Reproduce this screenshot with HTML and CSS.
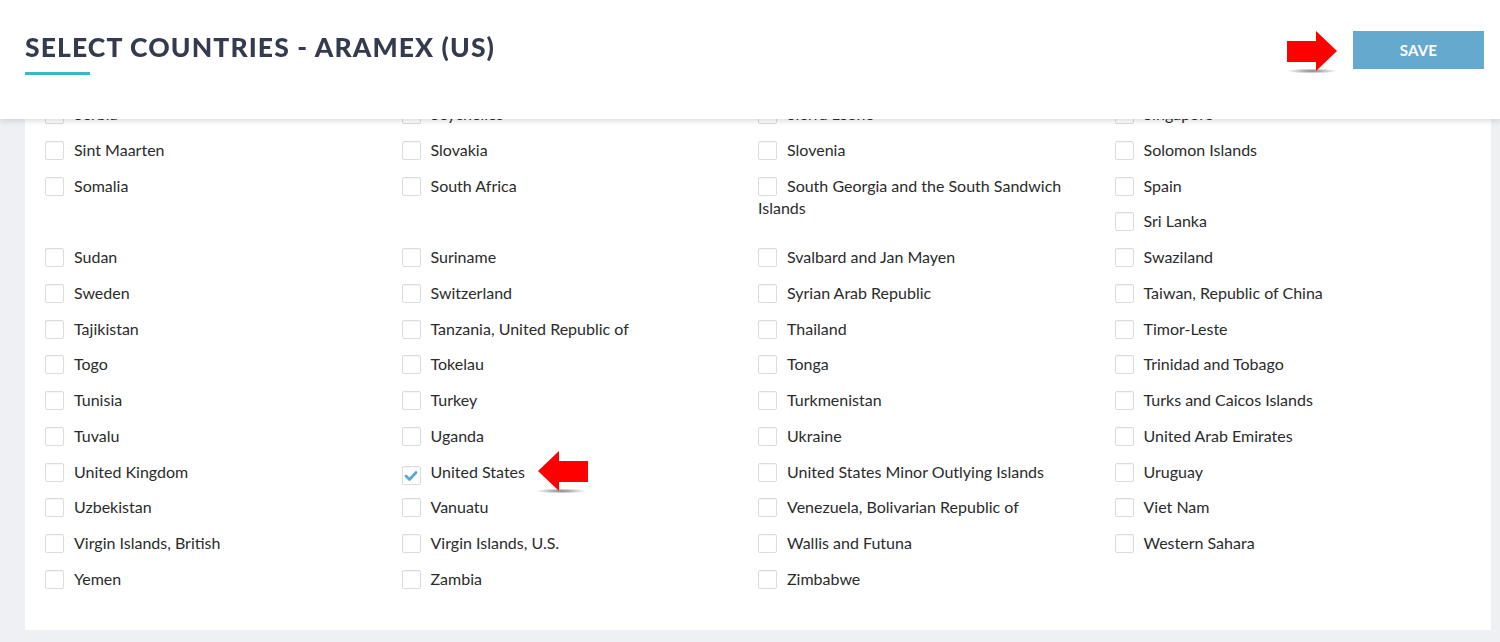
FILE: index.html
```html
<!DOCTYPE html>
<html lang="en">
<head>
    <meta charset="UTF-8">
    <meta name="viewport" content="width=device-width, initial-scale=1.0">
    <title>Select countries</title>
    <link rel="stylesheet" href="styles.css">
</head>
<body>

    <header class="topbar">
        <div class="title-wrap">
            <h1 class="title">SELECT COUNTRIES - ARAMEX (US)</h1>
            <span class="title-line"></span>
        </div>
        <div class="actions">
            <svg class="arrow" width="52" height="44" viewBox="0 0 52 44">
                <defs>
                    <radialGradient id="shadowR" cx="50%" cy="50%" r="50%">
                        <stop offset="0%" stop-color="#000" stop-opacity="0.5"/>
                        <stop offset="100%" stop-color="#000" stop-opacity="0"/>
                    </radialGradient>
                </defs>
                <ellipse cx="25" cy="40" rx="25" ry="2.5" fill="url(#shadowR)"/>
                <polygon points="0,10 29,10 29,0 50,20 29,40 29,31 0,31" fill="#ff0000"/>
            </svg>
            <button class="btn-save">SAVE</button>
        </div>
    </header>

    <main class="page">
        <section class="card">
            <ul class="country-list">
                <li class="country"><label><span class="box"></span>Serbia</label></li>
                <li class="country"><label><span class="box"></span>Seychelles</label></li>
                <li class="country"><label><span class="box"></span>Sierra Leone</label></li>
                <li class="country"><label><span class="box"></span>Singapore</label></li>

                <li class="country"><label><span class="box"></span>Sint Maarten</label></li>
                <li class="country"><label><span class="box"></span>Slovakia</label></li>
                <li class="country"><label><span class="box"></span>Slovenia</label></li>
                <li class="country"><label><span class="box"></span>Solomon Islands</label></li>

                <li class="country"><label><span class="box"></span>Somalia</label></li>
                <li class="country"><label><span class="box"></span>South Africa</label></li>
                <li class="country tall"><label><span class="box"></span>South Georgia and the South Sandwich Islands</label></li>
                <li class="country"><label><span class="box"></span>Spain</label></li>

                <li class="country last-col"><label><span class="box"></span>Sri Lanka</label></li>

                <li class="country"><label><span class="box"></span>Sudan</label></li>
                <li class="country"><label><span class="box"></span>Suriname</label></li>
                <li class="country"><label><span class="box"></span>Svalbard and Jan Mayen</label></li>
                <li class="country"><label><span class="box"></span>Swaziland</label></li>

                <li class="country"><label><span class="box"></span>Sweden</label></li>
                <li class="country"><label><span class="box"></span>Switzerland</label></li>
                <li class="country"><label><span class="box"></span>Syrian Arab Republic</label></li>
                <li class="country"><label><span class="box"></span>Taiwan, Republic of China</label></li>

                <li class="country"><label><span class="box"></span>Tajikistan</label></li>
                <li class="country"><label><span class="box"></span>Tanzania, United Republic of</label></li>
                <li class="country"><label><span class="box"></span>Thailand</label></li>
                <li class="country"><label><span class="box"></span>Timor-Leste</label></li>

                <li class="country"><label><span class="box"></span>Togo</label></li>
                <li class="country"><label><span class="box"></span>Tokelau</label></li>
                <li class="country"><label><span class="box"></span>Tonga</label></li>
                <li class="country"><label><span class="box"></span>Trinidad and Tobago</label></li>

                <li class="country"><label><span class="box"></span>Tunisia</label></li>
                <li class="country"><label><span class="box"></span>Turkey</label></li>
                <li class="country"><label><span class="box"></span>Turkmenistan</label></li>
                <li class="country"><label><span class="box"></span>Turks and Caicos Islands</label></li>

                <li class="country"><label><span class="box"></span>Tuvalu</label></li>
                <li class="country"><label><span class="box"></span>Uganda</label></li>
                <li class="country"><label><span class="box"></span>Ukraine</label></li>
                <li class="country"><label><span class="box"></span>United Arab Emirates</label></li>

                <li class="country"><label><span class="box"></span>United Kingdom</label></li>
                <li class="country marked">
                    <label><span class="box checked"><svg width="14" height="12" viewBox="0 0 14 12"><polyline points="2,6 5.5,9.5 12,2.5" fill="none" stroke="#5aa8d6" stroke-width="2.8" stroke-linecap="round" stroke-linejoin="round"/></svg></span>United States</label>
                    <svg class="arrow arrow-left" width="52" height="44" viewBox="0 0 52 44">
                        <defs>
                            <radialGradient id="shadowL" cx="50%" cy="50%" r="50%">
                                <stop offset="0%" stop-color="#000" stop-opacity="0.5"/>
                                <stop offset="100%" stop-color="#000" stop-opacity="0"/>
                            </radialGradient>
                        </defs>
                        <ellipse cx="27" cy="40" rx="25" ry="2.5" fill="url(#shadowL)"/>
                        <polygon points="0,10 29,10 29,0 50,20 29,40 29,31 0,31" fill="#ff0000"/>
                    </svg>
                </li>
                <li class="country"><label><span class="box"></span>United States Minor Outlying Islands</label></li>
                <li class="country"><label><span class="box"></span>Uruguay</label></li>

                <li class="country"><label><span class="box"></span>Uzbekistan</label></li>
                <li class="country"><label><span class="box"></span>Vanuatu</label></li>
                <li class="country"><label><span class="box"></span>Venezuela, Bolivarian Republic of</label></li>
                <li class="country"><label><span class="box"></span>Viet Nam</label></li>

                <li class="country"><label><span class="box"></span>Virgin Islands, British</label></li>
                <li class="country"><label><span class="box"></span>Virgin Islands, U.S.</label></li>
                <li class="country"><label><span class="box"></span>Wallis and Futuna</label></li>
                <li class="country"><label><span class="box"></span>Western Sahara</label></li>

                <li class="country"><label><span class="box"></span>Yemen</label></li>
                <li class="country"><label><span class="box"></span>Zambia</label></li>
                <li class="country"><label><span class="box"></span>Zimbabwe</label></li>
            </ul>
        </section>
    </main>

</body>
</html>
```

FILE: styles.css
```css
/* General reset */
* {
    margin: 0;
    padding: 0;
    box-sizing: border-box;
}

html, body {
    height: 100%;
    overflow: hidden;
}

body {
    background-color: #eff0f4;
    font-family: 'Lato', 'Open Sans', sans-serif;
    color: #2b2b2b;
}

/* Top bar, stays over the list */
.topbar {
    position: fixed;
    top: 0;
    left: 0;
    right: 0;
    z-index: 10;
    height: 119px;
    background-color: #ffffff;
    box-shadow: 0 2px 6px rgba(0, 0, 0, 0.14);
    display: flex;
    justify-content: space-between;
    align-items: flex-start;
    padding: 31px 16px 0 25px;
}

.title-wrap {
    display: flex;
    flex-direction: column;
}

.title {
    font-family: 'Lato', sans-serif;
    font-weight: 900;
    font-size: 26.5px;
    line-height: 32px;
    letter-spacing: 1.1px;
    color: #343b4f;
}

.title-line {
    width: 65px;
    height: 3px;
    margin-top: 9px;
    background-color: #3cb6c6;
}

.actions {
    display: flex;
    align-items: flex-start;
    gap: 14px;
}

.actions .arrow {
    display: block;
}

.btn-save {
    width: 131px;
    height: 38px;
    border: none;
    background-color: #65a9cf;
    color: #ffffff;
    font-family: 'Lato', sans-serif;
    font-weight: 700;
    font-size: 15px;
    letter-spacing: 0.2px;
    cursor: pointer;
}

/* Page content */
.page {
    padding: 83px 9px 12px 25px;
}

.card {
    background-color: #ffffff;
    padding: 20px 20px 26px 20px;
}

.country-list {
    list-style: none;
    display: grid;
    grid-template-columns: repeat(4, 1fr);
    grid-auto-rows: 35.75px;
}

.country {
    position: relative;
    padding-right: 15px;
    font-size: 16px;
    line-height: 22px;
}

.country.tall {
    grid-row: span 2;
}

.country.last-col {
    grid-column: 4;
}

.box {
    display: inline-block;
    width: 19px;
    height: 19px;
    margin-right: 10px;
    vertical-align: -4px;
    border: 1px solid #dcdcdc;
    border-radius: 2px;
    background-color: #ffffff;
    box-shadow: inset 0 1px 1px rgba(0, 0, 0, 0.04);
}

.box.checked {
    display: inline-flex;
    align-items: center;
    justify-content: center;
}

/* red pointer next to the selected country */
.arrow-left {
    position: absolute;
    left: 134px;
    top: -10px;
    transform: scaleX(-1);
}
```
